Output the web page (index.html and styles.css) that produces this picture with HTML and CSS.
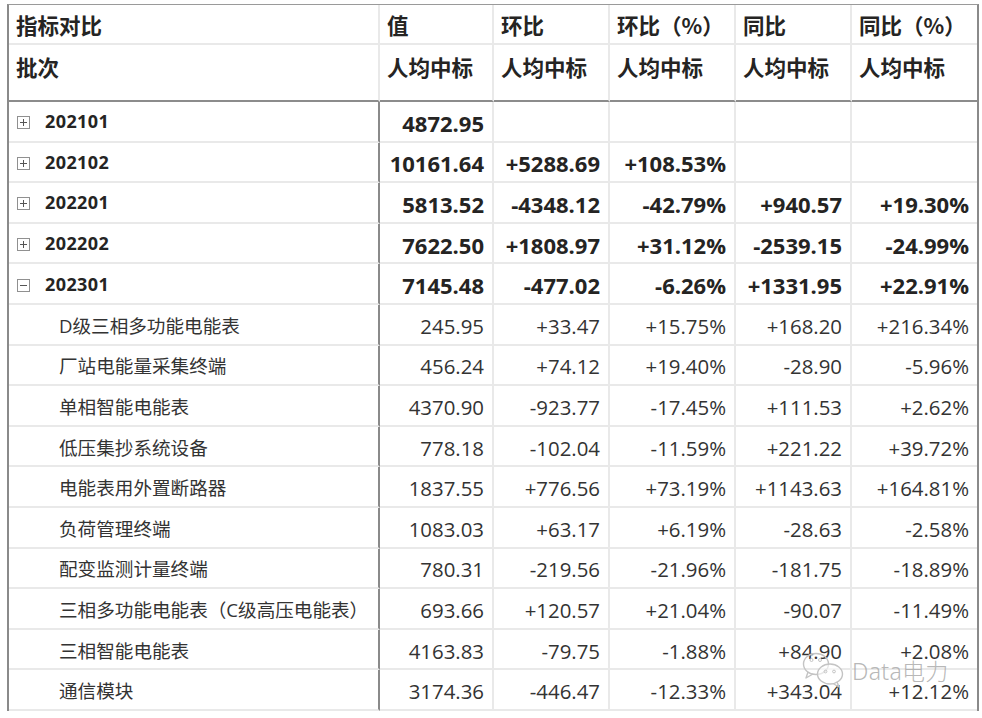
FILE: index.html
```html
<!DOCTYPE html>
<html lang="zh-CN">
<head>
<meta charset="utf-8">
<title>指标对比</title>
<link rel="stylesheet" href="styles.css">
</head>
<body>
<div class="wrap">
  <div class="matrix">
    <div class="c h1">指标对比</div>
    <div class="c h1">值</div>
    <div class="c h1">环比</div>
    <div class="c h1">环比（%）</div>
    <div class="c h1">同比</div>
    <div class="c h1 last">同比（%）</div>

    <div class="c h2">批次</div>
    <div class="c h2">人均中标</div>
    <div class="c h2">人均中标</div>
    <div class="c h2">人均中标</div>
    <div class="c h2">人均中标</div>
    <div class="c h2 last">人均中标</div>

    <div class="c b first batch"><span class="tog plus"></span>202101</div>
    <div class="c b n bold">4872.95</div>
    <div class="c b n bold"></div>
    <div class="c b n bold"></div>
    <div class="c b n bold"></div>
    <div class="c b n bold last"></div>

    <div class="c b first batch"><span class="tog plus"></span>202102</div>
    <div class="c b n bold">10161.64</div>
    <div class="c b n bold">+5288.69</div>
    <div class="c b n bold">+108.53%</div>
    <div class="c b n bold"></div>
    <div class="c b n bold last"></div>

    <div class="c b first batch"><span class="tog plus"></span>202201</div>
    <div class="c b n bold">5813.52</div>
    <div class="c b n bold">-4348.12</div>
    <div class="c b n bold">-42.79%</div>
    <div class="c b n bold">+940.57</div>
    <div class="c b n bold last">+19.30%</div>

    <div class="c b first batch"><span class="tog plus"></span>202202</div>
    <div class="c b n bold">7622.50</div>
    <div class="c b n bold">+1808.97</div>
    <div class="c b n bold">+31.12%</div>
    <div class="c b n bold">-2539.15</div>
    <div class="c b n bold last">-24.99%</div>

    <div class="c b first batch"><span class="tog minus"></span>202301</div>
    <div class="c b n bold">7145.48</div>
    <div class="c b n bold">-477.02</div>
    <div class="c b n bold">-6.26%</div>
    <div class="c b n bold">+1331.95</div>
    <div class="c b n bold last">+22.91%</div>

    <div class="c b first sub">D级三相多功能电能表</div>
    <div class="c b n">245.95</div>
    <div class="c b n">+33.47</div>
    <div class="c b n">+15.75%</div>
    <div class="c b n">+168.20</div>
    <div class="c b n last">+216.34%</div>

    <div class="c b first sub">厂站电能量采集终端</div>
    <div class="c b n">456.24</div>
    <div class="c b n">+74.12</div>
    <div class="c b n">+19.40%</div>
    <div class="c b n">-28.90</div>
    <div class="c b n last">-5.96%</div>

    <div class="c b first sub">单相智能电能表</div>
    <div class="c b n">4370.90</div>
    <div class="c b n">-923.77</div>
    <div class="c b n">-17.45%</div>
    <div class="c b n">+111.53</div>
    <div class="c b n last">+2.62%</div>

    <div class="c b first sub">低压集抄系统设备</div>
    <div class="c b n">778.18</div>
    <div class="c b n">-102.04</div>
    <div class="c b n">-11.59%</div>
    <div class="c b n">+221.22</div>
    <div class="c b n last">+39.72%</div>

    <div class="c b first sub">电能表用外置断路器</div>
    <div class="c b n">1837.55</div>
    <div class="c b n">+776.56</div>
    <div class="c b n">+73.19%</div>
    <div class="c b n">+1143.63</div>
    <div class="c b n last">+164.81%</div>

    <div class="c b first sub">负荷管理终端</div>
    <div class="c b n">1083.03</div>
    <div class="c b n">+63.17</div>
    <div class="c b n">+6.19%</div>
    <div class="c b n">-28.63</div>
    <div class="c b n last">-2.58%</div>

    <div class="c b first sub">配变监测计量终端</div>
    <div class="c b n">780.31</div>
    <div class="c b n">-219.56</div>
    <div class="c b n">-21.96%</div>
    <div class="c b n">-181.75</div>
    <div class="c b n last">-18.89%</div>

    <div class="c b first sub">三相多功能电能表（C级高压电能表）</div>
    <div class="c b n">693.66</div>
    <div class="c b n">+120.57</div>
    <div class="c b n">+21.04%</div>
    <div class="c b n">-90.07</div>
    <div class="c b n last">-11.49%</div>

    <div class="c b first sub">三相智能电能表</div>
    <div class="c b n">4163.83</div>
    <div class="c b n">-79.75</div>
    <div class="c b n">-1.88%</div>
    <div class="c b n">+84.90</div>
    <div class="c b n last">+2.08%</div>

    <div class="c b first sub">通信模块</div>
    <div class="c b n">3174.36</div>
    <div class="c b n">-446.47</div>
    <div class="c b n">-12.33%</div>
    <div class="c b n">+343.04</div>
    <div class="c b n last">+12.12%</div>
  </div>

  <div class="watermark">
    <svg class="wm-logo" width="44" height="36" viewBox="0 0 44 36">
      <ellipse cx="14" cy="12" rx="12.5" ry="10.5" fill="none" stroke="#c4c4c4" stroke-width="1.4"/>
      <path d="M6 20 L4 26 L11 22" fill="none" stroke="#c4c4c4" stroke-width="1.4" stroke-linejoin="round"/>
      <circle cx="9.5" cy="8" r="1.5" fill="none" stroke="#c4c4c4" stroke-width="1"/>
      <circle cx="18" cy="8" r="1.5" fill="none" stroke="#c4c4c4" stroke-width="1"/>
      <ellipse cx="28" cy="22" rx="12.5" ry="10" fill="rgba(255,255,255,0.6)" stroke="#c4c4c4" stroke-width="1.4"/>
      <path d="M35 30 L37 35 L31 31.5" fill="none" stroke="#c4c4c4" stroke-width="1.4" stroke-linejoin="round"/>
      <circle cx="23.5" cy="19.5" r="1.4" fill="none" stroke="#c4c4c4" stroke-width="1"/>
      <circle cx="32" cy="19.5" r="1.4" fill="none" stroke="#c4c4c4" stroke-width="1"/>
    </svg>
    <span class="wm-text">Data电力</span>
  </div>
</div>
</body>
</html>
```

FILE: styles.css
```css
html, body {
  margin: 0;
  padding: 0;
  background: #ffffff;
}

.wrap {
  position: relative;
  width: 982px;
  height: 718px;
  overflow: hidden;
}

.matrix {
  display: grid;
  grid-template-columns: 371px 114px 116px 126px 116px 125px;
  grid-template-rows: 40px 57px repeat(15, 40.6px);
  margin: 4px 0 0 7px;
  width: max-content;
  border-top: 1px solid #9a9a9a;
  border-left: 2px solid #8a8a8a;
  border-right: 2px solid #8a8a8a;
  font-family: "Open Sans", "Noto Sans CJK SC", sans-serif;
  color: #252423;
}

.c {
  box-sizing: border-box;
  border-right: 2px solid #e9e9e9;
  border-bottom: 2px solid #e9e9e9;
  overflow: hidden;
  white-space: nowrap;
}

.c.last {
  border-right: none;
}

.h1, .h2 {
  font-family: "Noto Sans CJK SC", sans-serif;
  font-weight: 700;
  font-size: 21.5px;
  line-height: 24px;
  padding-left: 7px;
}

.h1 {
  padding-top: 8px;
}

.h2 {
  padding-top: 10px;
  border-bottom: 2px solid #8c8c8c;
}

.b.first {
  border-right: 2px solid #8a8a8a;
}

.n {
  display: flex;
  align-items: center;
  justify-content: flex-end;
  padding-right: 8px;
  padding-top: 3px;
  font-size: 20.4px;
  color: #333333;
}

.n.bold {
  font-weight: 700;
  font-size: 22px;
  color: #252423;
}

.batch {
  display: flex;
  align-items: center;
  padding-left: 8px;
  font-weight: 700;
  font-size: 18px;
  letter-spacing: 0.4px;
}

.tog {
  position: relative;
  box-sizing: border-box;
  width: 13px;
  height: 13px;
  border: 1px solid #909090;
  margin-right: 15px;
  margin-top: 3px;
  flex: none;
}

.tog::before {
  content: "";
  position: absolute;
  left: 2px;
  top: 5px;
  width: 7px;
  height: 1px;
  background: #555555;
}

.tog.plus::after {
  content: "";
  position: absolute;
  left: 5px;
  top: 2px;
  width: 1px;
  height: 7px;
  background: #555555;
}

.sub {
  display: flex;
  align-items: center;
  padding-left: 50px;
  font-size: 18.6px;
  color: #333333;
  font-family: "Open Sans", "Noto Sans CJK SC", sans-serif;
}

.watermark {
  position: absolute;
  left: 802px;
  top: 652px;
  display: flex;
  align-items: center;
  pointer-events: none;
}

.wm-logo {
  display: block;
  margin-right: 6px;
}

.wm-text {
  font-family: "Noto Sans", "Noto Sans CJK SC", sans-serif;
  font-weight: 300;
  font-size: 23px;
  color: rgba(165, 165, 165, 0.8);
  letter-spacing: 0.3px;
}
```
